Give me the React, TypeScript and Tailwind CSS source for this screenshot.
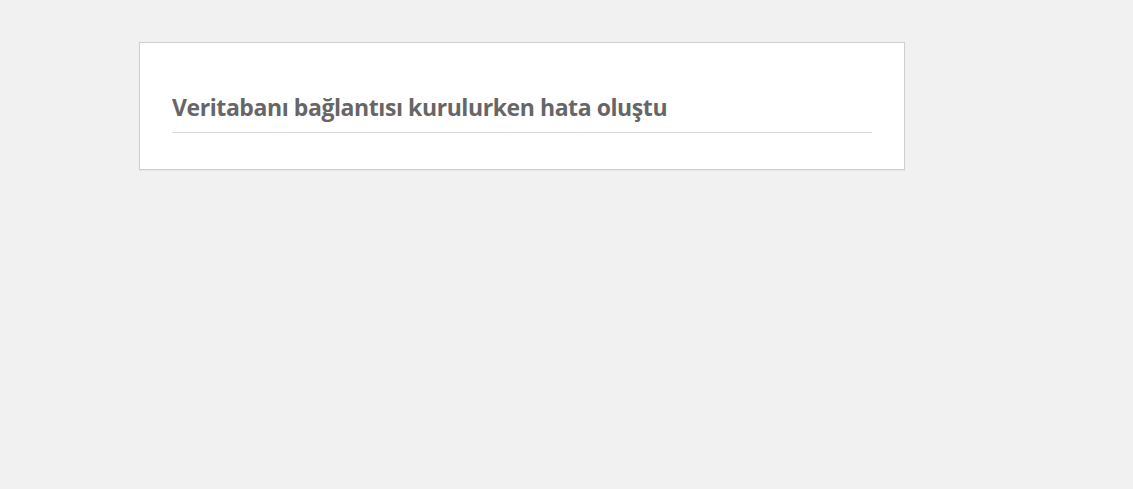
export default function App() {
  return (
    <div className="min-h-[489px] bg-[#f1f1f1] pt-[42px] pl-[139px]">
      <div className="w-[766px] bg-white border border-[#ccd0d4] px-8 pt-[46px] pb-[36px] shadow-[0_1px_1px_rgba(0,0,0,0.04)]">
        <h1 className="font-['Open_Sans','Noto_Sans',sans-serif] text-[23px] font-bold tracking-[-0.42px] text-[#666] leading-[36px] pb-[7px] border-b border-[#dadada] whitespace-nowrap">
          Veritabanı bağlantısı kurulurken hata oluştu
        </h1>
      </div>
    </div>
  );
}
